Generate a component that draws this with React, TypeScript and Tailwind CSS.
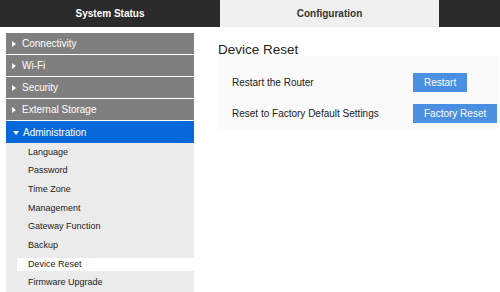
import { useState } from 'react';

const SECTIONS = ['Connectivity', 'Wi-Fi', 'Security', 'External Storage'];

const ADMIN_ITEMS = [
  'Language',
  'Password',
  'Time Zone',
  'Management',
  'Gateway Function',
  'Backup',
  'Device Reset',
  'Firmware Upgrade',
];

function Caret({ open }: { open?: boolean }) {
  return open ? (
    <svg width="6" height="4" viewBox="0 0 6 4" className="ml-[7px] mr-[4px] mt-[2px]">
      <path d="M0 0h6L3 4z" fill="#fff" />
    </svg>
  ) : (
    <svg width="4" height="6" viewBox="0 0 4 6" className="ml-[6px] mr-[6px]">
      <path d="M0 0l4 3-4 3z" fill="#fff" />
    </svg>
  );
}

export default function App() {
  const [active, setActive] = useState('Device Reset');

  return (
    <div className="h-[292px] w-[500px] overflow-hidden bg-white font-['Liberation_Sans',Arial,sans-serif]">
      {/* top tabs */}
      <div className="flex h-[27px] bg-[#2b2b2b] text-[10px] font-bold">
        <div className="flex w-[220px] items-center justify-center text-white">System Status</div>
        <div className="flex w-[219px] items-center justify-center bg-[#f0f0f0] text-[#333]">Configuration</div>
      </div>

      <div className="flex">
        {/* sidebar */}
        <div className="ml-[6px] mt-[6px] flex w-[188px] flex-col">
          <div className="flex flex-col gap-px">
            {SECTIONS.map((s) => (
              <div key={s} className="flex h-[21px] items-center bg-[#7f7f7f] text-[10px] text-white">
                <Caret />
                {s}
              </div>
            ))}
            <div className="flex h-[22px] items-center bg-[#0569db] text-[10px] text-white">
              <Caret open />
              Administration
            </div>
          </div>
          <div className="flex flex-col bg-[#ebebeb] pb-2">
            {ADMIN_ITEMS.map((item) => (
              <div key={item} className="flex h-[18.7px] items-center pl-[11px]" onClick={() => setActive(item)}>
                <div
                  className={`flex h-[13px] w-full items-center pl-[11px] text-[9px] text-[#222] ${
                    active === item ? 'bg-white' : ''
                  }`}
                >
                  {item}
                </div>
              </div>
            ))}
          </div>
        </div>

        {/* content */}
        <div className="ml-[24px] mt-[16px] w-[280px]">
          <h1 className="text-[13.5px] leading-[14px] text-[#222]">Device Reset</h1>
          <div className="mt-[-1px] bg-[#fafafa] pb-[6px] pl-[14px] pt-[17px] text-[10px] text-[#222]">
            <div className="flex h-[19px] items-center">
              <span className="w-[181px]">Restart the Router</span>
              <button className="h-[19px] bg-[#4a8fe2] px-[11px] text-white">Restart</button>
            </div>
            <div className="mt-[12px] flex h-[19px] items-center">
              <span className="w-[181px]">Reset to Factory Default Settings</span>
              <button className="h-[19px] bg-[#4a8fe2] px-[11px] text-white">Factory Reset</button>
            </div>
          </div>
        </div>
      </div>
    </div>
  );
}
